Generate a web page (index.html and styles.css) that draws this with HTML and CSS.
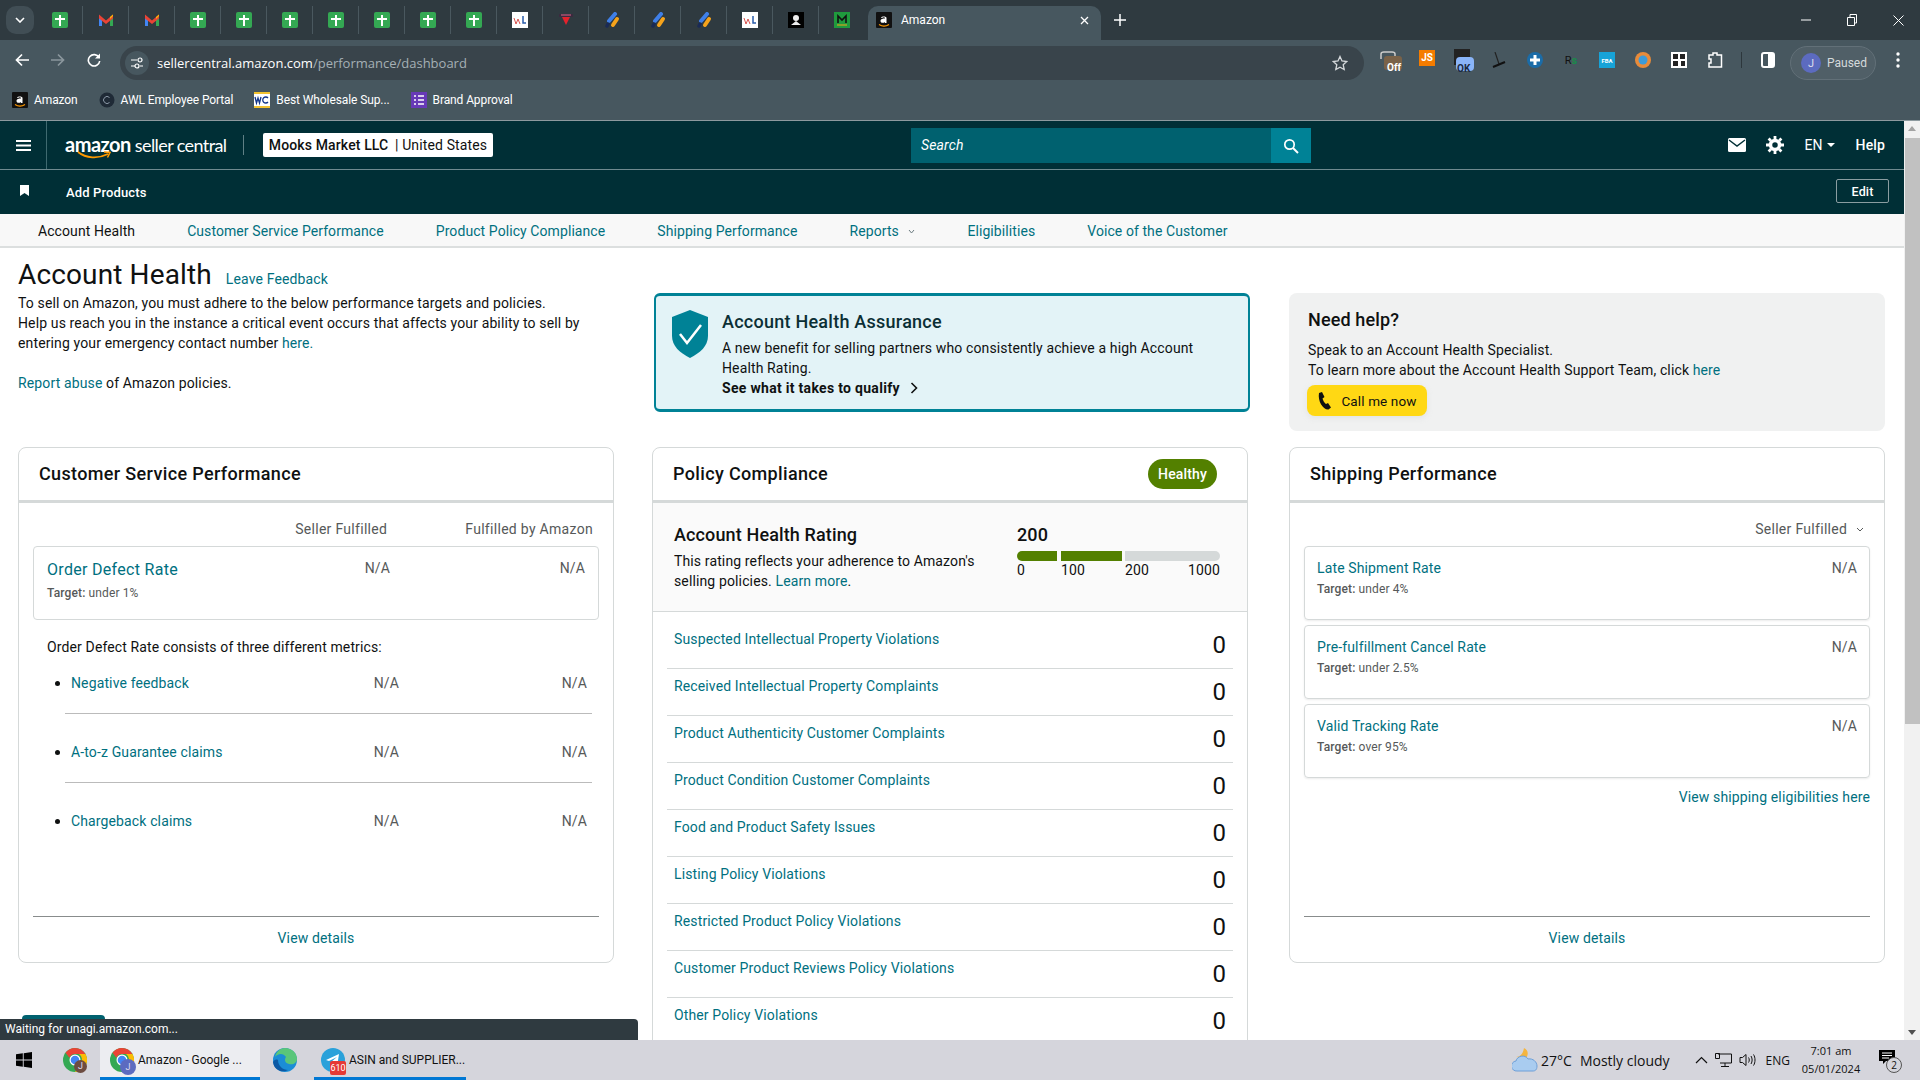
FILE: index.html
```html
<!DOCTYPE html>
<html lang="en">
<head>
    <meta charset="UTF-8">
    <title>Amazon</title>
    <link rel="stylesheet" href="styles.css">
</head>
<body>
    <svg class="hidden">
        <symbol id="sheet" viewBox="0 0 16 16"><rect width="16" height="16" rx="2" fill="#34a853"/><path d="M7 3h2v3h4v2H9v6H7V8H3V6h4z" fill="#fff"/></symbol>
        <symbol id="gmail" viewBox="0 0 16 16"><path d="M1 4v10h3V7z" fill="#4285f4"/><path d="M15 4v10h-3V7z" fill="#34a853"/><path d="M1 2.500 8 8.500l7-6v4L8 12 1 6.500z" fill="#ea4335"/><path d="M12 7l3-3V2.500L12 5z" fill="#fbbc04"/></symbol>
        <symbol id="wl" viewBox="0 0 16 16"><rect width="16" height="16" fill="#fff"/><path d="M2 6l2 6 2-5 2 5" fill="none" stroke="#d9534f" stroke-width="1"/><path d="M11 4v7h3" fill="none" stroke="#2a5caa" stroke-width="1.500"/></symbol>
        <symbol id="flag" viewBox="0 0 16 16"><path d="M1 2h14v3H1z" fill="#3b2a3f"/><path d="M4 5h8l-4 8z" fill="#e4222c"/><path d="M3 3h10" stroke="#d68" stroke-width="1"/></symbol>
        <symbol id="strip" viewBox="0 0 16 16"><path d="M11 2 5 9" stroke="#3f7fe8" stroke-width="4" stroke-linecap="round"/><path d="M13 7l-4 6" stroke="#f6a31b" stroke-width="4" stroke-linecap="round"/><path d="M4 12l-1 2" stroke="#1a2a55" stroke-width="3.500" stroke-linecap="round"/></symbol>
        <symbol id="azlogo" viewBox="0 0 16 16"><rect width="16" height="16" rx="1" fill="#111"/><path d="M5 5.500C6 4 10.500 4 10.500 6v5H9V10c-1.500 1.500-4.500 1-4.500-1 0-2 2.500-2.500 4.500-2.500 0-1.500-2-1.500-3-.5z" fill="#fff"/><path d="M3 12.500c3 2 7 2 10 0" fill="none" stroke="#f90" stroke-width="1.200"/></symbol>
        <symbol id="chrome" viewBox="0 0 24 24"><circle cx="12" cy="12" r="12" fill="#34a853"/><path d="M12 0a12 12 0 0 1 10.400 6H12a6 6 0 0 0-5.600 3.800L2.500 4.700A12 12 0 0 1 12 0z" fill="#ea4335"/><path d="M22.400 6A12 12 0 0 1 12 24l5-8.500A6 6 0 0 0 16 6z" fill="#fbbc04"/><circle cx="12" cy="12" r="5.500" fill="#fff"/><circle cx="12" cy="12" r="4.300" fill="#4285f4"/></symbol>
    </svg>

    <header class="tabstrip">
        <button class="tab-search"><svg width="10" height="6" viewBox="0 0 10 6"><path d="M1 1l4 4 4-4" fill="none" stroke="#fff" stroke-width="1.600"/></svg></button>
        <div class="tab-list">
            <span class="pin"><svg><use href="#sheet"/></svg></span>
            <span class="pin"><svg><use href="#gmail"/></svg></span>
            <span class="pin"><svg><use href="#gmail"/></svg></span>
            <span class="pin"><svg><use href="#sheet"/></svg></span>
            <span class="pin"><svg><use href="#sheet"/></svg></span>
            <span class="pin"><svg><use href="#sheet"/></svg></span>
            <span class="pin"><svg><use href="#sheet"/></svg></span>
            <span class="pin"><svg><use href="#sheet"/></svg></span>
            <span class="pin"><svg><use href="#sheet"/></svg></span>
            <span class="pin"><svg><use href="#sheet"/></svg></span>
            <span class="pin"><svg><use href="#wl"/></svg></span>
            <span class="pin"><svg><use href="#flag"/></svg></span>
            <span class="pin"><svg><use href="#strip"/></svg></span>
            <span class="pin"><svg><use href="#strip"/></svg></span>
            <span class="pin"><svg><use href="#strip"/></svg></span>
            <span class="pin"><svg><use href="#wl"/></svg></span>
            <span class="pin"><svg viewBox="0 0 16 16"><rect width="16" height="16" fill="#000"/><circle cx="8" cy="6" r="3" fill="#eee"/><path d="M3 13l5-4 5 4z" fill="#eee"/></svg></span>
            <span class="pin"><svg viewBox="0 0 16 16"><rect width="16" height="16" fill="#1f9a3d"/><path d="M4 11V4l4 4 4-4v7" fill="none" stroke="#111" stroke-width="1.600"/><path d="M3 13h10" stroke="#f6a31b"/></svg></span>
        </div>
        <div class="tab-active">
            <svg class="fav"><use href="#azlogo"/></svg>
            <span class="tab-title">Amazon</span>
            <svg class="tab-close" width="9" height="9" viewBox="0 0 9 9"><path d="M1 1l7 7M8 1l-7 7" stroke="#fff" stroke-width="1.300"/></svg>
        </div>
        <svg class="tab-new" width="12" height="12" viewBox="0 0 12 12"><path d="M6 0v12M0 6h12" stroke="#fff" stroke-width="1.500"/></svg>
        <div class="win-controls">
            <svg width="10" height="10" viewBox="0 0 10 10"><path d="M0 5h10" stroke="#fff"/></svg>
            <svg width="10" height="12" viewBox="0 0 10 12"><path d="M.5 3.500h7v8h-7zM3 3V.5h6.500V9H8" fill="none" stroke="#fff"/></svg>
            <svg width="11" height="11" viewBox="0 0 11 11"><path d="M.5.500l10 10M10.500.500l-10 10" stroke="#fff"/></svg>
        </div>
    </header>

    <div class="toolbar">
        <svg class="nav-btn" width="14" height="14" viewBox="0 0 14 14"><path d="M14 7H2M7 1.500 1.500 7 7 12.500" fill="none" stroke="#fff" stroke-width="1.700"/></svg>
        <svg class="nav-btn" width="14" height="14" viewBox="0 0 14 14"><path d="M0 7h12M7 1.500 12.500 7 7 12.500" fill="none" stroke="#8b979d" stroke-width="1.700"/></svg>
        <svg class="nav-btn" width="14" height="14" viewBox="0 0 14 14"><path d="M12 4.500A5.700 5.700 0 1 0 12.700 8" fill="none" stroke="#fff" stroke-width="1.600"/><path d="M13 .5v5H8z" fill="#fff"/></svg>
        <div class="omnibox">
            <span class="site-info"><svg width="14" height="14" viewBox="0 0 14 14"><path d="M1 4h6M10 10h3M1 10h4" stroke="#fff" stroke-width="1.200"/><circle cx="10" cy="4" r="2" fill="none" stroke="#fff" stroke-width="1.200"/><circle cx="7" cy="10" r="2" fill="none" stroke="#fff" stroke-width="1.200"/></svg></span>
            <span class="url">sellercentral.amazon.com<span class="url-path">/performance/dashboard</span></span>
            <svg class="star" width="16" height="16" viewBox="0 0 16 16"><path d="M8 1.500l2 4.500 4.700.5-3.500 3.200 1 4.800L8 12.200l-4.200 2.300 1-4.800L1.300 6.500 6 6z" fill="none" stroke="#d5d9db" stroke-width="1.300"/></svg>
        </div>
        <div class="extensions">
            <span class="ext"><svg width="22" height="20" viewBox="0 0 22 20"><path d="M1 9V4q0-2 3-2h8q3 0 3 2v2" fill="none" stroke="#ccc" stroke-width="1.500"/><rect x="4" y="6" width="18" height="14" rx="3" fill="#7a6248"/></svg><em class="ext-label off">Off</em></span>
            <span class="ext js">JS</span>
            <span class="ext"><svg width="22" height="22" viewBox="0 0 22 22"><rect x="2" width="16" height="16" fill="#222"/><rect x="4" y="8" width="18" height="14" rx="4" fill="#8ab4f8"/></svg><em class="ext-label ok">OK</em></span>
            <span class="ext"><svg width="14" height="16" viewBox="0 0 14 16"><path d="M3 0l4 12" stroke="#222" stroke-width="1.200"/><path d="M1 15l12-5" stroke="#111" stroke-width="2"/></svg></span>
            <span class="ext"><svg width="16" height="16" viewBox="0 0 16 16"><circle cx="8" cy="8" r="8" fill="#1b6ca8"/><path d="M8 3v10M3 8h10" stroke="#fff" stroke-width="3"/></svg></span>
            <span class="ext rs">R<b>s</b></span>
            <span class="ext fba">FBA</span>
            <span class="ext"><svg width="16" height="16" viewBox="0 0 16 16"><circle cx="8" cy="8" r="8" fill="#e88b3a"/><circle cx="8" cy="8" r="4.500" fill="#3d9bd9"/></svg></span>
            <span class="ext"><svg width="16" height="16" viewBox="0 0 16 16"><rect width="16" height="16" fill="#fff"/><path d="M2 2h5v5H2zM9 2h5v5H9zM2 9h5v5H2zM10 9h4v5h-4z" fill="#222"/></svg></span>
            <span class="ext"><svg width="16" height="16" viewBox="0 0 16 16"><path d="M2 3h4V1h4v2h4.500v12H2v-4h2V7H2z" fill="none" stroke="#fff" stroke-width="1.500"/></svg></span>
        </div>
        <span class="tool-sep"></span>
        <svg class="side-panel" width="14" height="16" viewBox="0 0 14 16"><rect x="1" y="1" width="12" height="14" rx="2" fill="#47575f" stroke="#fff" stroke-width="2"/><rect x="7" y="1" width="6" height="14" fill="#fff"/></svg>
        <div class="profile"><span class="avatar">J</span><span>Paused</span></div>
        <svg class="menu-dots" width="4" height="16" viewBox="0 0 4 16"><circle cx="2" cy="2" r="1.700" fill="#fff"/><circle cx="2" cy="8" r="1.700" fill="#fff"/><circle cx="2" cy="14" r="1.700" fill="#fff"/></svg>
    </div>

    <div class="bookmarks">
        <span class="bookmark"><svg class="fav"><use href="#azlogo"/></svg>Amazon</span>
        <span class="bookmark"><svg class="fav" viewBox="0 0 16 16"><circle cx="8" cy="8" r="7.500" fill="#1f2a36"/><path d="M10.500 5.500a3.500 3.500 0 1 0 0 5" fill="none" stroke="#8a97a5"/></svg>AWL Employee Portal</span>
        <span class="bookmark"><svg class="fav" viewBox="0 0 16 16"><rect width="16" height="16" fill="#fff"/><path d="M0 0h16v2H0zM0 14h16v2H0z" fill="#f2c230"/><path d="M1 5l1.500 6 1.500-5 1.500 5L7 5" fill="none" stroke="#12358a" stroke-width="1.300"/><path d="M14 6a3 3 0 1 0 0 4" fill="none" stroke="#12358a" stroke-width="1.300"/></svg>Best Wholesale Sup...</span>
        <span class="bookmark"><svg class="fav" viewBox="0 0 16 16"><rect width="16" height="16" fill="#673ab7"/><path d="M3 4h2M7 4h6M3 8h2M7 8h6M3 12h2M7 12h6" stroke="#fff" stroke-width="1.400"/></svg>Brand Approval</span>
    </div>

    <div class="viewport">
        <div class="page">
            <div class="topbar">
                <span class="burger"><svg width="15" height="11" viewBox="0 0 15 11"><path d="M0 1h15M0 5.500h15M0 10h15" stroke="#fff" stroke-width="1.800"/></svg></span>
                <div class="logo">
                    <span class="logo-amazon">amazon</span>
                    <span class="logo-seller">seller central</span>
                    <svg class="logo-smile" width="34" height="9" viewBox="0 0 34 9"><path d="M1 1c8 6.500 20 7 30 2" fill="none" stroke="#f90" stroke-width="1.800"/><path d="M27 1l6 .5-2.500 5" fill="none" stroke="#f90" stroke-width="1.500"/></svg>
                </div>
                <span class="logo-sep"></span>
                <div class="account-box"><b>Mooks Market LLC</b> | United States</div>
                <div class="search">
                    <span class="search-input">Search</span>
                    <span class="search-btn"><svg width="16" height="16" viewBox="0 0 16 16"><circle cx="6.500" cy="6.500" r="4.700" fill="none" stroke="#fff" stroke-width="1.700"/><path d="M10 10l5 5" stroke="#fff" stroke-width="2"/></svg></span>
                </div>
                <div class="top-actions">
                    <svg width="18" height="14" viewBox="0 0 18 14"><rect width="18" height="14" rx="1.500" fill="#fff"/><path d="M1 2l8 6 8-6" fill="none" stroke="#002f36" stroke-width="1.400"/></svg>
                    <svg width="18" height="18" viewBox="0 0 18 18"><circle cx="9" cy="9" r="4.500" fill="none" stroke="#fff" stroke-width="3.500"/><path d="M9 0v3M9 15v3M0 9h3M15 9h3M2.600 2.600l2.200 2.200M13.200 13.200l2.200 2.200M15.400 2.600l-2.200 2.200M4.800 13.200l-2.200 2.200" stroke="#fff" stroke-width="2.800"/></svg>
                    <span class="lang">EN<i class="caret"></i></span>
                    <span class="help">Help</span>
                </div>
            </div>

            <div class="shortcuts">
                <svg width="9" height="11" viewBox="0 0 9 11"><path d="M0 0h9v11L4.500 8 0 11z" fill="#fff"/></svg>
                <span class="shortcut-label">Add Products</span>
                <span class="edit-btn">Edit</span>
            </div>

            <nav class="subnav">
                <span class="active">Account Health</span>
                <a>Customer Service Performance</a>
                <a>Product Policy Compliance</a>
                <a>Shipping Performance</a>
                <a class="reports">Reports <svg width="7" height="5" viewBox="0 0 7 5"><path d="M1 1l2.500 3L6 1" fill="none" stroke="#6b7b80"/></svg></a>
                <a>Eligibilities</a>
                <a>Voice of the Customer</a>
            </nav>

            <main class="content">
                <section class="intro">
                    <div class="intro-text">
                        <div class="title-row"><h1>Account Health</h1><a>Leave Feedback</a></div>
                        <p>To sell on Amazon, you must adhere to the below performance targets and policies.<br>Help us reach you in the instance a critical event occurs that affects your ability to sell by entering your emergency contact number <a>here.</a></p>
                        <p class="report"><a>Report abuse</a> of Amazon policies.</p>
                    </div>
                    <div class="assurance">
                        <svg width="36" height="48" viewBox="0 0 36 48"><path d="M18 0l18 7v19c0 10-8 17-18 22C8 43 0 36 0 26V7z" fill="#008296"/><path d="M8 24l7 9 14-18" fill="none" stroke="#fff" stroke-width="2.500"/></svg>
                        <div>
                            <h3>Account Health Assurance</h3>
                            <p>A new benefit for selling partners who consistently achieve a high Account Health Rating.</p>
                            <b class="qualify">See what it takes to qualify <svg width="8" height="12" viewBox="0 0 8 12"><path d="M1.500 1l5 5-5 5" fill="none" stroke="#0f1111" stroke-width="1.600"/></svg></b>
                        </div>
                    </div>
                    <div class="need-help">
                        <h3>Need help?</h3>
                        <p>Speak to an Account Health Specialist.<br>To learn more about the Account Health Support Team, click <a>here</a></p>
                        <span class="call-btn"><svg width="16" height="18" viewBox="0 0 16 18"><path d="M2 1l3-1 2.500 5-2 1.500c.5 2 2 4.500 3.500 5.500l2-1 3 4.500-2.500 2C6 18 .5 9 2 1z" fill="#0f1111"/></svg>Call me now</span>
                    </div>
                </section>

                <section class="cards">
                    <article class="card card-side">
                        <div class="card-head"><h2>Customer Service Performance</h2></div>
                        <div class="col-heads"><span>Seller Fulfilled</span><span>Fulfilled by Amazon</span></div>
                        <div class="odr-box">
                            <div><a class="odr-link">Order Defect Rate</a><div class="target"><b>Target:</b> under 1%</div></div>
                            <span class="na">N/A</span><span class="na">N/A</span>
                        </div>
                        <p class="odr-note">Order Defect Rate consists of three different metrics:</p>
                        <ul class="metrics">
                            <li><a>Negative feedback</a><span class="na">N/A</span><span class="na">N/A</span></li>
                            <li><a>A-to-z Guarantee claims</a><span class="na">N/A</span><span class="na">N/A</span></li>
                            <li><a>Chargeback claims</a><span class="na">N/A</span><span class="na">N/A</span></li>
                        </ul>
                        <div class="card-foot"><a>View details</a></div>
                    </article>

                    <article class="card card-mid">
                        <div class="card-head"><h2>Policy Compliance</h2><span class="pill">Healthy</span></div>
                        <div class="rating">
                            <div class="rating-text">
                                <h4>Account Health Rating</h4>
                                <p>This rating reflects your adherence to Amazon's selling policies. <a>Learn more</a>.</p>
                            </div>
                            <div class="rating-scale">
                                <b>200</b>
                                <div class="bar"><i class="seg seg-a"></i><i class="seg seg-b"></i><i class="seg seg-c"></i></div>
                                <div class="bar-labels"><span class="lab-a">0</span><span class="lab-b">100</span><span class="lab-c">200</span><span>1000</span></div>
                            </div>
                        </div>
                        <ul class="violations">
                            <li><a>Suspected Intellectual Property Violations</a><span>0</span></li>
                            <li><a>Received Intellectual Property Complaints</a><span>0</span></li>
                            <li><a>Product Authenticity Customer Complaints</a><span>0</span></li>
                            <li><a>Product Condition Customer Complaints</a><span>0</span></li>
                            <li><a>Food and Product Safety Issues</a><span>0</span></li>
                            <li><a>Listing Policy Violations</a><span>0</span></li>
                            <li><a>Restricted Product Policy Violations</a><span>0</span></li>
                            <li><a>Customer Product Reviews Policy Violations</a><span>0</span></li>
                            <li><a>Other Policy Violations</a><span>0</span></li>
                        </ul>
                    </article>

                    <article class="card card-side card-ship">
                        <div class="card-head"><h2>Shipping Performance</h2></div>
                        <div class="col-heads ship-filter"><span>Seller Fulfilled <svg width="8" height="5" viewBox="0 0 8 5"><path d="M1 1l3 3 3-3" fill="none" stroke="#565959"/></svg></span></div>
                        <div class="ship-box"><div><a>Late Shipment Rate</a><div class="target"><b>Target:</b> under 4%</div></div><span class="na">N/A</span></div>
                        <div class="ship-box"><div><a>Pre-fulfillment Cancel Rate</a><div class="target"><b>Target:</b> under 2.5%</div></div><span class="na">N/A</span></div>
                        <div class="ship-box"><div><a>Valid Tracking Rate</a><div class="target"><b>Target:</b> over 95%</div></div><span class="na">N/A</span></div>
                        <a class="ship-link">View shipping eligibilities here</a>
                        <div class="card-foot"><a>View details</a></div>
                    </article>
                </section>
            </main>

            <div class="peek"></div>
            <div class="status-bubble">Waiting for unagi.amazon.com...</div>
        </div>
        <div class="scrollbar">
            <i class="arrow-up"></i>
            <div class="thumb"></div>
            <i class="arrow-down"></i>
        </div>
    </div>

    <footer class="taskbar">
        <svg class="start" width="16" height="16" viewBox="0 0 16 16"><path d="M0 2.300 6.800 1.300v6.300H0zM7.700 1.200 16 0v7.600H7.700zM0 8.500h6.800v6.300L0 13.800zM7.700 8.500H16V16l-8.300-1.200z" fill="#000"/></svg>
        <span class="task-icon chrome-pin"><svg width="24" height="24"><use href="#chrome"/></svg><i class="mini-avatar brown">J</i></span>
        <span class="task task-on"><svg width="24" height="24"><use href="#chrome"/></svg><i class="mini-avatar">J</i><span class="task-name">Amazon - Google ...</span></span>
        <span class="task-icon edge"><svg width="24" height="24" viewBox="0 0 24 24"><circle cx="12" cy="12" r="12" fill="#1b8dd6"/><path d="M12 0c7 0 12 5 12 11 0 4-4 6-8 5s-5-4-3-7C10 4 4 6 2 9c1-5 5-9 10-9z" fill="#5ac67a"/><path d="M5 12c0 6 5 10 10 10-5 3-14 1-15-8 1-2 3-3 5-2z" fill="#0c59a4"/></svg></span>
        <span class="task task-tg"><svg width="24" height="24" viewBox="0 0 24 24"><circle cx="12" cy="12" r="12" fill="#2aa1da"/><path d="M5 12l13-6-2 13-4-3-2 2v-4l6-5-8 4z" fill="#fff"/></svg><i class="badge">610</i><span class="task-name">ASIN and SUPPLIER...</span></span>
        <div class="tray">
            <svg width="26" height="24" viewBox="0 0 26 24"><path d="M12 0c4 2 5 6 2 10L4 9c4 0 7-3 8-9z" fill="#f5b53f"/><path d="M5 23a5 5 0 0 1-1-10c1-5 9-7 12-2 5-1 9 3 9 7s-2 5-4 5z" fill="#a9ccf0" stroke="#6fa0d8"/></svg>
            <span class="temp">27°C</span>
            <span class="weather">Mostly cloudy</span>
            <svg class="tray-chev" width="13" height="8" viewBox="0 0 13 8"><path d="M1 7l5.500-5.500L12 7" fill="none" stroke="#111" stroke-width="1.200"/></svg>
            <svg class="tray-net" width="17" height="14" viewBox="0 0 17 14"><path d="M3 1h13.500v9H5M10 10v3M6 13.500h8M.5.500h4v5h-4z" fill="none" stroke="#111"/></svg>
            <svg class="tray-vol" width="17" height="14" viewBox="0 0 17 14"><path d="M1 4.500h2.500L7 1.500v11l-3.500-3H1zM9.500 4.500c1 1.500 1 3.500 0 5M12 3c1.500 2.500 1.500 5.500 0 8M14.500 1.500c2 3 2 8 0 11" fill="none" stroke="#111"/></svg>
            <span class="eng">ENG</span>
            <div class="clock"><span>7:01 am</span><span>05/01/2024</span></div>
            <span class="notify"><svg width="16" height="14" viewBox="0 0 16 14"><path d="M0 0h16v11H7l-3 3v-3H0z" fill="#000"/><path d="M3 3h10M3 5.500h10M3 8h7" stroke="#fff"/></svg><i class="notify-count">2</i></span>
        </div>
    </footer>
</body>
</html>
```

FILE: styles.css
```css
* {
    margin: 0;
    padding: 0;
    box-sizing: border-box;
}

.hidden {
    display: none;
}

body {
    width: 1920px;
    height: 1080px;
    overflow: hidden;
    display: flex;
    flex-direction: column;
    font-family: Roboto, "Liberation Sans", sans-serif;
    font-size: 14px;
    color: #0f1111;
    background: #fff;
}

a {
    color: #00707f;
    text-decoration: none;
}

ul {
    list-style: none;
}

/* browser chrome */
.tabstrip {
    height: 40px;
    background: #2f3a40;
    display: flex;
    align-items: flex-start;
    position: relative;
    flex: none;
}

.tab-search {
    width: 28px;
    height: 28px;
    margin: 6px 0 0 6px;
    border: none;
    border-radius: 10px;
    background: #414e55;
    display: flex;
    align-items: center;
    justify-content: center;
}

.tab-list {
    display: flex;
    margin: 6px 0 0 3px;
    height: 28px;
}

.pin {
    width: 46px;
    height: 28px;
    display: flex;
    align-items: center;
    justify-content: center;
    border-right: 1px solid #4a585f;
}

.pin:last-child {
    border-right: none;
}

.pin svg,
.fav {
    width: 16px;
    height: 16px;
    flex: none;
}

.tab-active {
    width: 233px;
    height: 34px;
    margin: 6px 0 0 3px;
    padding: 0 12px 6px 8px;
    background: #47575f;
    border-radius: 10px 10px 0 0;
    display: flex;
    align-items: center;
    gap: 9px;
    color: #fff;
    font-size: 12px;
}

.tab-title {
    flex: 1;
}

.tab-new {
    margin: 14px 0 0 13px;
}

.win-controls {
    margin: 14px 0 0 auto;
    display: flex;
    align-items: center;
    gap: 36px;
    padding-right: 16px;
}

.toolbar {
    height: 40px;
    background: #47575f;
    display: flex;
    align-items: center;
    padding: 0 0 0 15px;
    flex: none;
}

.nav-btn {
    margin-right: 22px;
}

.nav-btn:nth-child(3) {
    margin-right: 19px;
}

.omnibox {
    width: 1244px;
    height: 34px;
    margin-top: 6px;
    align-self: flex-start;
    border-radius: 17px;
    background: #39444b;
    display: flex;
    align-items: center;
    padding: 0 12px 0 5px;
    color: #fff;
    font-family: "Open Sans", sans-serif;
    font-size: 13px;
}

.site-info {
    width: 24px;
    height: 24px;
    border-radius: 50%;
    background: #47575f;
    display: flex;
    align-items: center;
    justify-content: center;
    margin-right: 8px;
}

.url-path {
    color: #a5b0b5;
}

.star {
    margin-left: auto;
    margin-right: 4px;
}

.extensions {
    display: flex;
    align-items: center;
    width: 360px;
    margin-left: 9px;
}

.ext {
    position: relative;
    width: 36px;
    height: 28px;
    display: flex;
    align-items: center;
    justify-content: center;
}

.ext-label {
    position: absolute;
    font-style: normal;
    font-size: 10px;
    font-weight: 700;
    color: #fff;
}

.ext-label.off {
    left: 14px;
    bottom: 1px;
}

.ext-label.ok {
    left: 12px;
    bottom: 0;
    color: #1a2a44;
}

.js {
    flex: none;
    color: #fff;
    font-size: 10px;
    font-weight: 700;
    background: #f57c00 content-box;
    padding: 0 10px;
    height: 16px;
    margin-top: -5px;
}

.rs {
    color: #111;
    font-size: 11px;
}

.rs b {
    color: #1a8a4a;
}

.fba {
    color: #fff;
    font-size: 6px;
    font-weight: 700;
    background: #17a3d8 content-box;
    padding: 0 10px;
    height: 16px;
}

.tool-sep {
    width: 1px;
    height: 16px;
    background: #2d373c;
    margin-left: 8px;
}

.side-panel {
    margin-left: 19px;
}

.profile {
    width: 86px;
    height: 34px;
    margin-top: 6px;
    margin-left: 15px;
    align-self: flex-start;
    border: 1px solid #627078;
    border-radius: 17px;
    background: #505f67;
    display: flex;
    align-items: center;
    gap: 6px;
    padding-left: 10px;
    color: #d5dadc;
    font-size: 12px;
}

.avatar {
    width: 20px;
    height: 20px;
    border-radius: 50%;
    background: #5c6bc0;
    color: #dde;
    display: flex;
    align-items: center;
    justify-content: center;
    font-size: 11px;
}

.menu-dots {
    margin-left: 20px;
}

.bookmarks {
    height: 40px;
    background: #47575f;
    display: flex;
    align-items: center;
    gap: 21px;
    padding-left: 12px;
    color: #fff;
    font-size: 12px;
    letter-spacing: -0.1px;
    flex: none;
}

.bookmark {
    display: flex;
    align-items: center;
    gap: 6px;
}

/* seller central page */
.viewport {
    flex: 1;
    min-height: 0;
    display: flex;
    border-top: 1px solid #8d9a9f;
}

.page {
    width: 1904px;
    position: relative;
    overflow: hidden;
    letter-spacing: 0.13px;
}

.scrollbar {
    width: 16px;
    background: #f1f1f1;
    position: relative;
    display: flex;
    flex-direction: column;
    align-items: center;
}

.thumb {
    width: 15px;
    height: 586px;
    margin-top: 1px;
    background: #c1c1c1;
}

.arrow-up,
.arrow-down {
    width: 0;
    height: 0;
    border-left: 4px solid transparent;
    border-right: 4px solid transparent;
}

.arrow-up {
    border-bottom: 5px solid #a3a3a3;
    margin-top: 5px;
    margin-bottom: 6px;
}

.arrow-down {
    border-top: 5px solid #505050;
    margin-top: auto;
    margin-bottom: 5px;
}

.topbar {
    height: 49px;
    background: #002f36;
    border-bottom: 1px solid #6f8a8f;
    display: flex;
    align-items: center;
    color: #fff;
}

.burger {
    width: 47px;
    height: 48px;
    border-right: 1px solid #3f6a70;
    display: flex;
    align-items: center;
    justify-content: center;
}

.logo {
    margin-left: 18px;
    width: 160px;
    display: flex;
    align-items: baseline;
    gap: 4px;
    position: relative;
    white-space: nowrap;
    margin-bottom: 3px;
}

.logo-amazon {
    font-family: Lato, sans-serif;
    font-size: 20px;
    font-weight: 700;
    letter-spacing: -0.5px;
}

.logo-seller {
    font-family: Lato, sans-serif;
    font-size: 18px;
    font-weight: 400;
    letter-spacing: -0.6px;
}

.logo-smile {
    position: absolute;
    left: 12px;
    top: 19px;
}

.logo-sep {
    width: 1px;
    height: 20px;
    margin-left: 18px;
    background: #5f8085;
}

.account-box {
    width: 230px;
    height: 24px;
    margin-left: 19px;
    background: #fff;
    border-radius: 2px;
    color: #0f1111;
    display: flex;
    align-items: center;
    gap: 3px;
    justify-content: center;
    white-space: pre;
}

.account-box b {
    font-weight: 500;
}

.search {
    width: 400px;
    height: 35px;
    margin-left: 418px;
    background: #00616f;
    display: flex;
    align-items: center;
    justify-content: space-between;
    margin-top: 1px;
}

.search-input {
    font-style: italic;
    padding: 0 0 2px 10px;
}

.search-btn {
    width: 40px;
    height: 35px;
    background: #008296;
    display: flex;
    align-items: center;
    justify-content: center;
}

.top-actions {
    margin-left: auto;
    padding-right: 19px;
    display: flex;
    align-items: center;
    gap: 20px;
}

.lang {
    display: flex;
    align-items: center;
    gap: 4px;
    margin-right: 1px;
}

.caret {
    width: 0;
    height: 0;
    border-left: 4px solid transparent;
    border-right: 4px solid transparent;
    border-top: 4px solid #fff;
}

.help {
    font-weight: 500;
}

.shortcuts {
    height: 44px;
    background: #002f36;
    display: flex;
    align-items: center;
    padding: 0 15px 0 20px;
    color: #fff;
}

.shortcuts svg {
    margin-top: -4px;
}

.shortcut-label {
    margin-left: 37px;
    font-size: 13px;
    font-weight: 500;
}

.edit-btn {
    margin-left: auto;
    margin-top: -2px;
    width: 53px;
    height: 24px;
    border: 1px solid #8a9da1;
    border-radius: 2px;
    font-size: 12.500px;
    font-weight: 500;
    display: flex;
    align-items: center;
    justify-content: center;
}

.subnav {
    height: 34px;
    background: #f8f8f8;
    border-bottom: 2px solid #dcdfdf;
    display: flex;
    align-items: center;
    gap: 52px;
    padding: 2px 0 0 38px;
    letter-spacing: 0.08px;
}

.reports svg {
    margin-left: 6px;
    vertical-align: 2px;
}

.content {
    padding: 0 19px 0 18px;
}

.intro {
    height: 199px;
    display: flex;
}

.intro-text {
    width: 596px;
    padding-top: 9px;
    line-height: 20px;
}

.title-row {
    display: flex;
    align-items: baseline;
    gap: 14px;
    height: 36px;
}

h1 {
    font-size: 28px;
    font-weight: 400;
    line-height: 36px;
}

.report {
    margin-top: 20px;
}

.assurance {
    width: 596px;
    height: 119px;
    margin: 45px 0 0 40px;
    border: 2px solid #008296;
    border-width: 3px 2px;
    border-radius: 6px;
    background: #e3f3f7;
    padding: 14px 20px 0 16px;
    display: flex;
    gap: 14px;
    line-height: 20px;
}

.assurance p {
    max-width: 495px;
}

.assurance h3 {
    font-size: 18px;
    font-weight: 500;
    line-height: 24px;
    margin: 0 0 4px;
    color: #0b2f35;
    letter-spacing: 0.25px;
}

.qualify {
    font-weight: 700;
    letter-spacing: 0.3px;
}

.qualify svg {
    margin-left: 6px;
    vertical-align: -1px;
}

.need-help {
    width: 596px;
    height: 138px;
    margin: 45px 0 0 39px;
    border-radius: 8px;
    background: #f0f1f1;
    padding: 15px 19px;
    line-height: 20px;
}

.need-help h3 {
    font-size: 18px;
    font-weight: 500;
    line-height: 24px;
    margin-bottom: 8px;
}

.call-btn {
    width: 120px;
    height: 31px;
    margin: 5px 0 0 -1px;
    border-radius: 8px;
    background: #ffd814;
    box-shadow: 0 2px 5px rgba(213, 217, 217, 0.5);
    display: flex;
    align-items: center;
    justify-content: center;
    gap: 8px;
    font-size: 13.500px;
}

.cards {
    display: flex;
    align-items: flex-start;
}

.card {
    border: 1px solid #d5d9d9;
    border-radius: 8px;
    background: #fff;
    position: relative;
}

.card-side {
    width: 596px;
    height: 516px;
}

.card-mid {
    width: 596px;
    margin-left: 38px;
    height: 700px;
}

.card-ship {
    margin-left: 41px;
}

.card-head {
    height: 55px;
    border-bottom: 3px solid #d5d9d9;
    display: flex;
    align-items: center;
    justify-content: space-between;
    padding: 0 30px 2px 20px;
}

h2 {
    font-size: 18px;
    font-weight: 500;
    letter-spacing: 0.35px;
}

.pill {
    width: 69px;
    height: 30px;
    margin-top: 2px;
    border-radius: 15px;
    background: #538000;
    color: #fff;
    font-weight: 500;
    display: flex;
    align-items: center;
    justify-content: center;
}

.col-heads {
    display: flex;
    justify-content: flex-end;
    gap: 78px;
    padding: 9px 20px 0 0;
    height: 43px;
    align-items: center;
    color: #565959;
    letter-spacing: 0.3px;
}

.odr-box {
    width: 566px;
    height: 74px;
    margin-left: 14px;
    border: 1px solid #d5d9d9;
    border-radius: 4px;
    display: grid;
    grid-template-columns: 1fr 70px 195px;
    padding: 11px 13px;
}

.na {
    color: #565959;
    text-align: right;
}

.odr-link {
    font-size: 16px;
    line-height: 24px;
    letter-spacing: 0.3px;
}

.target {
    font-size: 12px;
    line-height: 16px;
    margin-top: 3px;
    color: #565959;
}

.target b {
    font-weight: 500;
}

.odr-box .na {
    line-height: 20px;
}

.odr-note {
    margin: 17px 0 0 28px;
    line-height: 20px;
}

.metrics {
    padding: 16px 21px 0 46px;
}

.metrics li {
    height: 41px;
    margin-bottom: 28px;
    display: grid;
    grid-template-columns: 1fr 80px 188px;
    position: relative;
    padding: 0 5px 0 6px;
    line-height: 20px;
    border-bottom: 1px solid #bbb;
}

.metrics li:last-child {
    border-bottom: none;
}

.metrics li::before {
    content: "";
    position: absolute;
    left: -10px;
    top: 8px;
    width: 5px;
    height: 5px;
    border-radius: 50%;
    background: #0f1111;
}

.card-foot {
    position: absolute;
    left: 14px;
    right: 14px;
    bottom: 0;
    height: 46px;
    padding-bottom: 4px;
    border-top: 1px solid #888c8c;
    display: flex;
    align-items: center;
    justify-content: center;
}

.rating {
    height: 109px;
    background: #fafafa;
    border-bottom: 1px solid #d5d9d9;
    padding: 22px 27px 0 21px;
    display: flex;
    justify-content: space-between;
}

.rating-text {
    width: 330px;
    line-height: 20px;
}

h4,
.rating-scale > b {
    font-size: 18px;
    font-weight: 500;
    line-height: 20px;
    display: block;
}

.rating-text p {
    margin-top: 6px;
}

.rating-scale {
    width: 203px;
}

.bar {
    display: flex;
    margin-top: 6px;
}

.seg {
    height: 10px;
    background: #538000;
}

.seg-a {
    width: 40px;
    margin-right: 4px;
    border-radius: 5px 0 0 5px;
}

.seg-b {
    width: 61px;
    margin-right: 3px;
}

.seg-c {
    flex: 1;
    background: #d5d9d9;
    border-radius: 0 5px 5px 0;
}

.bar-labels {
    display: flex;
    line-height: 18px;
}

.lab-a {
    width: 44px;
}

.lab-b {
    width: 64px;
}

.lab-c {
    flex: 1;
}

.violations {
    padding: 10px 14px 0 14px;
}

.violations li {
    height: 47px;
    border-bottom: 1px solid #d5d9d9;
    display: flex;
    justify-content: space-between;
    padding: 7px 7px 0 7px;
    line-height: 20px;
}

.violations span {
    font-size: 24px;
    line-height: 30px;
    margin-top: 1px;
}

.ship-filter {
    height: 43px;
}

.ship-filter svg {
    margin-left: 5px;
    vertical-align: 2px;
}

.ship-box {
    width: 566px;
    height: 74px;
    margin: 0 0 5px 14px;
    border: 1px solid #d5d9d9;
    border-radius: 4px;
    display: flex;
    justify-content: space-between;
    padding: 11px 12px 0 12px;
    line-height: 20px;
    box-shadow: 0 1px 2px rgba(15, 17, 17, 0.08);
}

.ship-box .target {
    margin-top: 3px;
}

.ship-link {
    display: block;
    text-align: right;
    padding-right: 14px;
    margin-top: 9px;
    line-height: 20px;
}

.peek {
    position: absolute;
    left: 22px;
    bottom: 21px;
    width: 83px;
    height: 4px;
    border-radius: 4px 4px 0 0;
    background: #00616f;
}

.status-bubble {
    position: absolute;
    left: 0;
    bottom: 0;
    width: 638px;
    height: 21px;
    border-radius: 0 4px 0 0;
    background: #2f3a40;
    color: #fff;
    font-size: 12px;
    line-height: 21px;
    padding-left: 5px;
    letter-spacing: 0;
}

/* windows taskbar */
.taskbar {
    height: 40px;
    background: #d5d5dc;
    display: flex;
    align-items: center;
    position: relative;
    flex: none;
    font-size: 12px;
    color: #111;
}

.start {
    margin-left: 16px;
}

.task-icon {
    position: relative;
    display: flex;
    margin-left: 31px;
}

.task {
    height: 40px;
    position: relative;
    display: flex;
    align-items: center;
    gap: 4px;
    padding: 3px 0 0 10px;
    border-bottom: 3px solid #0078d4;
}

.task-name {
    white-space: nowrap;
}

.task-on {
    width: 160px;
    margin-left: 13px;
    background: #ecedf1;
}

.task-tg {
    width: 152px;
    margin-left: 17px;
    padding-left: 7px;
}

.task-icon.edge {
    margin-left: 13px;
}

.mini-avatar {
    position: absolute;
    left: 20px;
    top: 19px;
    width: 16px;
    height: 16px;
    border-radius: 50%;
    background: #5c6bc0;
    color: #dde;
    font-style: normal;
    font-size: 9px;
    text-align: center;
    line-height: 16px;
}

.chrome-pin .mini-avatar {
    left: 11px;
    top: 12px;
    width: 13px;
    height: 13px;
    line-height: 13px;
}

.mini-avatar.brown {
    background: #6d4c41;
}

.badge {
    position: absolute;
    left: 16px;
    top: 21px;
    width: 16px;
    height: 14px;
    border-radius: 2px;
    background: #e53935;
    color: #fff;
    font-style: normal;
    font-size: 9px;
    line-height: 14px;
    text-align: center;
}

.tray {
    margin-left: auto;
    display: flex;
    align-items: center;
    height: 40px;
    padding-right: 25px;
    font-family: "Open Sans", sans-serif;
    font-size: 14px;
}

.temp {
    margin-left: 3px;
}

.weather {
    margin-left: 8px;
    margin-right: 25px;
}

.tray-net {
    margin-left: 7px;
}

.tray-vol {
    margin-left: 7px;
}

.eng {
    margin-left: 10px;
    font-size: 12px;
}

.clock {
    margin-left: 5px;
    width: 72px;
    display: flex;
    flex-direction: column;
    align-items: center;
    font-size: 11px;
    line-height: 18px;
}

.notify {
    position: relative;
    display: flex;
    margin-left: 12px;
    margin-top: -6px;
}

.notify-count {
    position: absolute;
    left: 7px;
    top: 7px;
    width: 16px;
    height: 16px;
    border: 1px solid #555;
    border-radius: 50%;
    background: #d5d5dc;
    font-style: normal;
    font-size: 10px;
    line-height: 14px;
    text-align: center;
}
```
